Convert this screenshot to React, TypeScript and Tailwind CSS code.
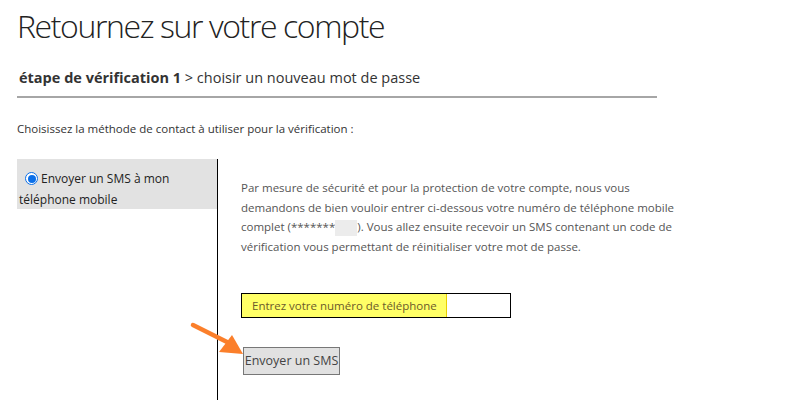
import React from "react";

export default function App() {
  const font = { fontFamily: '"Open Sans", "Noto Sans", sans-serif' };
  return (
    <div className="w-[800px] h-[400px] bg-white overflow-hidden relative text-[#333]" style={font}>
      <div className="pl-[17px] pt-[4px]">
        <h1 className="text-[32px] font-light leading-[44px] text-[#222] tracking-[-1.4px]">Retournez sur votre compte</h1>
        <div className="w-[640px] border-b-2 border-[#a6a6a6] mt-[19px] pb-[7px] pl-[2px] text-[14.5px] leading-[22px] text-[#333]">
          <span className="font-bold">étape de vérification 1</span>
          <span> &gt; choisir un nouveau mot de passe</span>
        </div>
        <p className="mt-[22px] text-[11.5px] leading-[18px] text-[#333]">
          Choisissez la méthode de contact à utiliser pour la vérification :
        </p>
        <div className="flex mt-[21px] h-[300px]">
          <div className="w-[201px] border-r border-black">
            <div className="bg-[#e2e2e2] h-[50px] pt-[9px] pl-[2px] text-[12px] leading-[21px] text-[#222]">
              <label className="flex items-center">
                <span className="inline-flex items-center justify-center w-[13px] h-[13px] rounded-full border border-[#0b6fe8] bg-white ml-[6px] mr-[3px]">
                  <span className="w-[8px] h-[8px] rounded-full bg-[#0b6fe8]" />
                </span>
                Envoyer un SMS à mon
              </label>
              <div>téléphone mobile</div>
            </div>
          </div>
          <div className="pl-[23px] pt-[19px]">
            <p className="w-[445px] text-[11.5px] leading-[19.5px] text-[#555]">
              Par mesure de sécurité et pour la protection de votre compte, nous vous<br />demandons de bien vouloir entrer ci-dessous votre numéro de téléphone mobile<br />complet (*******<span className="inline-block w-[22px] h-[16px] align-middle bg-[#ececec]" />). Vous allez ensuite recevoir un SMS contenant un code de<br />vérification vous permettant de réinitialiser votre mot de passe.
            </p>
            <div className="mt-[37px] w-[270px] h-[25px] border border-black flex">
              <div className="w-[205px] bg-[#ffff66] border-r border-[#e8d000] text-[11.5px] leading-[23px] pl-[10px] text-[#6b5a2a]">
                Entrez votre numéro de téléphone
              </div>
            </div>
            <button className="mt-[29px] ml-[2px] w-[97px] h-[28px] bg-[#e1e1e1] border border-[#777] text-[12.5px] text-[#444] leading-[26px] text-center" style={font}>
              Envoyer un SMS
            </button>
          </div>
        </div>
      </div>
      <svg className="absolute left-0 top-0" width="800" height="400" viewBox="0 0 800 400">
        <line x1="193" y1="325" x2="227" y2="342" stroke="#fb7f2b" strokeWidth="4.5" strokeLinecap="round" />
        <polygon points="243,354 219,352 232,335" fill="#fb7f2b" />
      </svg>
    </div>
  );
}
